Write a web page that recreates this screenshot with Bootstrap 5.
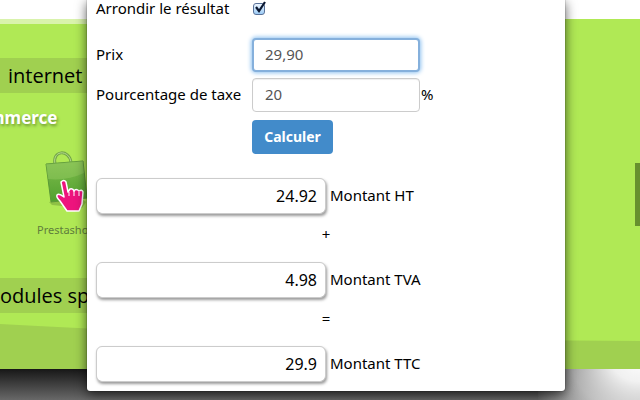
<!DOCTYPE html>
<html lang="fr">
<head>
<meta charset="utf-8">
<meta name="viewport" content="width=device-width, initial-scale=1">
<title>Calcul de TVA</title>
<link href="https://cdn.jsdelivr.net/npm/bootstrap@5.3.0/dist/css/bootstrap.min.css" rel="stylesheet">
<style>
body { font-family: "Noto Sans", "Open Sans", sans-serif; color: #000; background: #fff; }
.site-top { height: 19px; }
.hero { background: #b0e955; }
.hero-edge { width: 88px; height: 5px; background: #d9f3ac; }
.hero-space { height: 34px; }
.band { height: 35px; width: 16%; background: #a0d050; font-family: "Open Sans", sans-serif; font-size: 20px; line-height: 35px; }
.band-a { text-indent: 8px; }
.shop-title { margin: 13px 0 0 -12px; font-size: 17px; line-height: 24px; text-shadow: 1px 2px 3px #6d9732; }
.shop-item { margin-left: 37px; width: 66px; font-size: 11px; line-height: 16px; color: #5f7d3c; }
.shop-item svg { margin-left: 5px; }
.hills { height: 56px; }
.site-foot { height: 31px; background: linear-gradient(#171717, #686868); }
.foot-shade { margin-left: 84%; background: radial-gradient(ellipse 115px 90px at 100% -10px, #fff 0, #fffe 25%, #fff9 60%, #fff0 100%); }
.side-tab { right: 0; top: 163px; width: 5px; height: 63px; background: #67902e; }
.calc { left: 87px; top: 0; width: 478px; padding: 0 9px 9px; border-radius: 0 0 3px 3px; box-shadow: 0 3px 12px #000a, 0 0 1px #000; font-size: 15px; line-height: 22px; }
.calc label, .calc .unit { padding-bottom: 2px; }
.calc .unit { margin-left: 1px; }
.calc-label { width: 156px; }
.calc .form-control { border: 1px solid #ccc; border-radius: 4px; color: #555; font-size: 15px; line-height: 20px; height: 34px; padding: 5px 12px 7px; width: 168px; box-shadow: inset 0 1px 1px #0001; }
.calc .form-control.is-current { border: 2px solid #85b0dc; box-shadow: 0 0 4px 1px #8fc2f0; padding: 4px 11px 6px; }
.calc .form-control.total { width: 230px; height: 36px; border-radius: 6px; color: #000; font-size: 16px; padding: 6px 8px; box-shadow: 1px 2px 3px #0006; }
.tick { appearance: none; width: 12px; height: 12px; margin: 0; border: 1px solid #5a7299; border-radius: 3px; background: linear-gradient(#eef6ff, #9ccbf5); }
.tick-wrap { margin-left: 1px; }
.tick-wrap svg { left: 1px; top: -3px; pointer-events: none; }
.btn-calc { background: #428bca; color: #fff; font-size: 14px; line-height: 20px; height: 34px; width: 81px; padding: 7px 0; border-radius: 4px; }
.btn-calc:hover { background: #3071a9; color: #fff; }
.actions { padding: 2px 0 16px; }
.sign { width: 460px; height: 48px; line-height: 40px; }
.row-tick { height: 38px; padding-bottom: 21px; }
.gap-six { gap: 6px; }
</style>
<script src="https://cdn.jsdelivr.net/npm/bootstrap@5.3.0/dist/js/bootstrap.bundle.min.js"></script>
</head>
<body class="overflow-hidden">
<div class="site position-relative overflow-hidden">
  <header class="site-top"></header>
  <main class="hero">
    <div class="hero-edge"></div>
    <div class="hero-space"></div>
    <h2 class="band band-a fw-normal m-0 text-nowrap">internet</h2>
    <h3 class="shop-title fw-bold text-white pb-1 text-nowrap">mmerce</h3>
    <div class="shop-item pt-3">
      <svg class="d-block" width="54" height="64" viewBox="0 0 54 64" aria-hidden="true">
        <defs><linearGradient id="bag" x1="0" y1="0" x2="0" y2="1"><stop offset="0" stop-color="#7fbd4c"/><stop offset="1" stop-color="#51a02f"/></linearGradient></defs>
        <path d="M7 52L40 49 44 52 40 58 10 55z" fill="#7aa63b" opacity=".6"/>
        <path d="M13 14C10 0 27-1 29 12" fill="none" stroke="#73a548" stroke-width="3"/>
        <path d="M13 14C10 0 27-1 29 12" fill="none" stroke="#b5dc8c" stroke-width="1"/>
        <path d="M4 14L41 11 45 48 9 52z" fill="url(#bag)" stroke="#5b9837"/>
        <path d="M4 14L41 11 42 23Q25 31 6 29z" fill="#a2d46d" opacity=".35"/>
        <path d="M19 32q3-3 5 0l2 10 2-3q3-1 4 2 2-3 5 0 3-2 4 1l-1 12-3 7H25L18 51q-4-4-3-6 2-2 7 2z" fill="#ed147d" stroke="#fff" stroke-width="1.5" stroke-linejoin="round"/>
        <path d="M27 42v4m5-5v5m5-4v4" stroke="#fff" fill="none"/>
      </svg>
      <span class="d-block pt-2">Prestashop</span>
    </div>
    <div class="pt-4"></div>
    <h2 class="band fw-normal mt-3 mb-0 overflow-hidden text-nowrap">odules sp</h2>
    <svg class="hills d-block w-100" viewBox="0 0 640 56" preserveAspectRatio="none" aria-hidden="true"><path d="M0 11Q240 25 640 28V56H0z" fill="#a0d050"/></svg>
  </main>
  <footer class="site-foot"><div class="foot-shade h-100"></div></footer>
  <div class="side-tab position-absolute"></div>

  <form class="calc position-absolute bg-white">
    <div class="row-tick d-flex align-items-center">
      <label class="calc-label" for="round">Arrondir le résultat</label>
      <span class="tick-wrap position-relative d-flex">
        <input class="tick" type="checkbox" id="round" checked>
        <svg class="position-absolute" width="13" height="14" viewBox="0 0 13 14" aria-hidden="true"><path d="M2 7l3 4 6-9" fill="none" stroke="#0b1730" stroke-width="2.2"/></svg>
      </span>
    </div>
    <div class="d-flex flex-column gap-six">
      <div class="d-flex align-items-center">
        <label class="calc-label" for="price">Prix</label>
        <input class="form-control is-current" type="text" id="price" value="29,90">
      </div>
      <div class="d-flex align-items-center">
        <label class="calc-label text-nowrap" for="rate">Pourcentage de taxe</label>
        <input class="form-control" type="text" id="rate" value="20">
        <span class="unit">%</span>
      </div>
      <div class="actions d-flex">
        <span class="calc-label"></span>
        <button class="btn btn-calc border-0 fw-bold" type="button">Calculer</button>
      </div>
    </div>
    <div class="d-flex align-items-center gap-1 pt-2">
      <input class="form-control total text-end" type="text" id="ht" value="24.92"><label for="ht">Montant HT</label>
    </div>
    <div class="sign text-center">+</div>
    <div class="d-flex align-items-center gap-1">
      <input class="form-control total text-end" type="text" id="tva" value="4.98"><label for="tva">Montant TVA</label>
    </div>
    <div class="sign text-center">=</div>
    <div class="d-flex align-items-center gap-1">
      <input class="form-control total text-end" type="text" id="ttc" value="29.9"><label for="ttc">Montant TTC</label>
    </div>
  </form>
</div>
</body>
</html>
